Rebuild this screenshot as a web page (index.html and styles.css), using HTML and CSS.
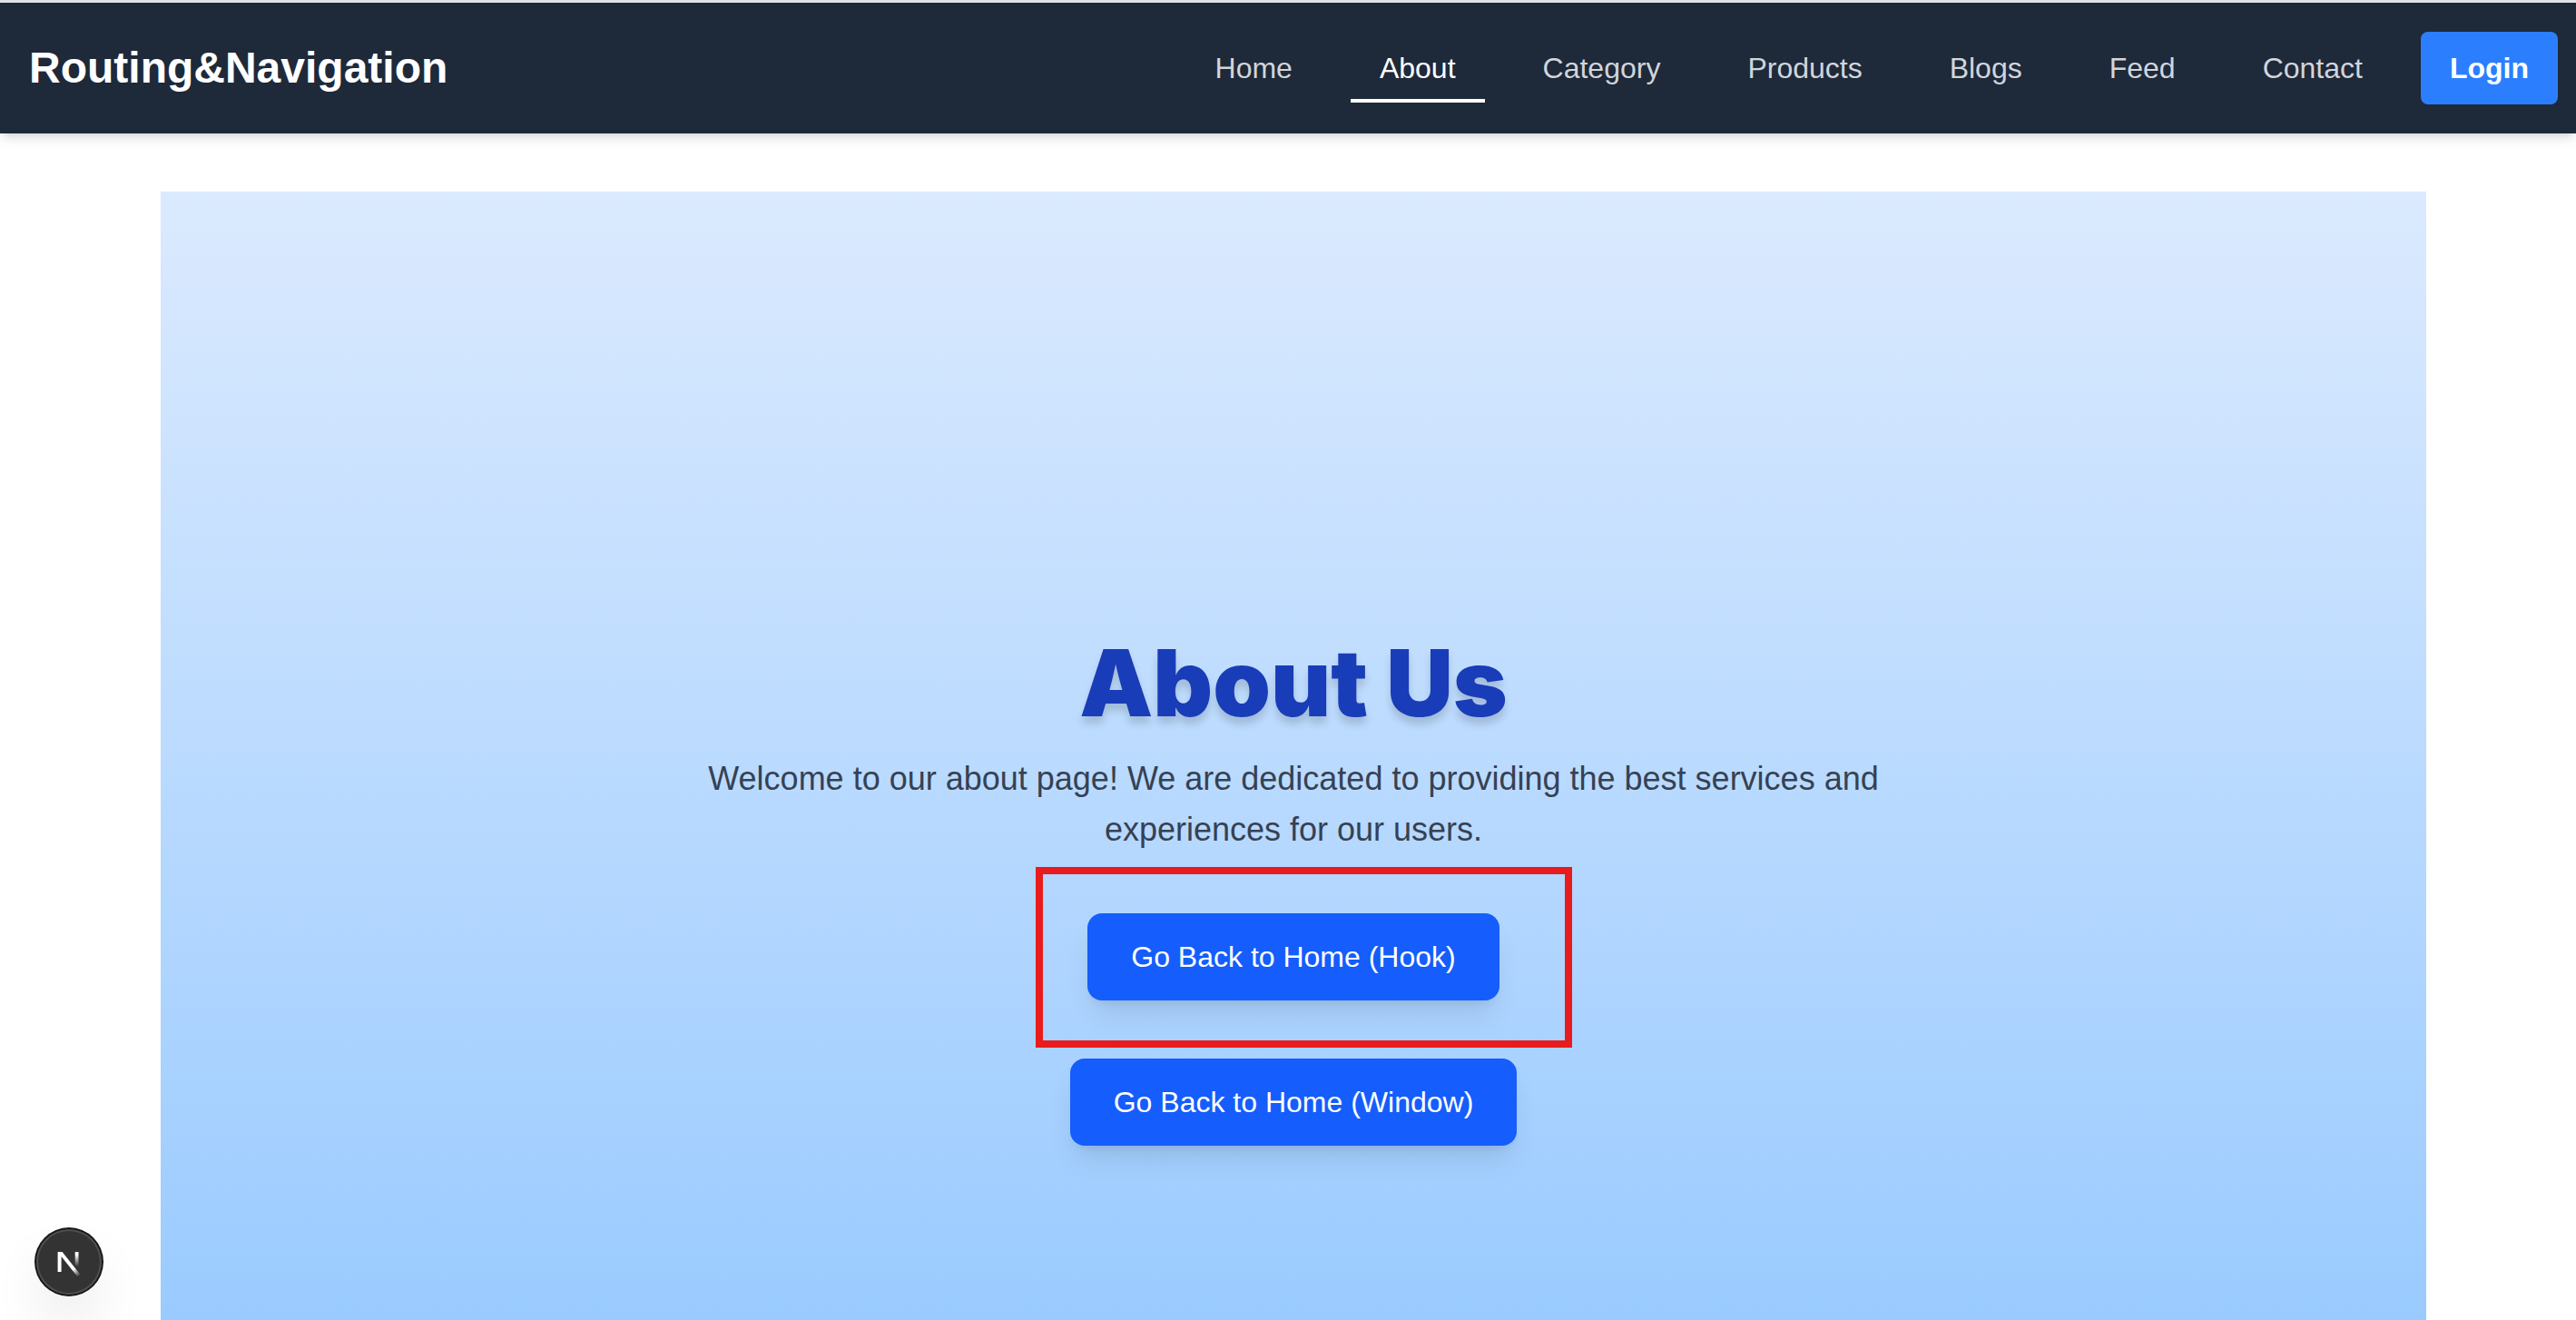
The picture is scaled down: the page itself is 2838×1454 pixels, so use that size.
FILE: index.html
```html
<!DOCTYPE html>
<html lang="en">
<head>
<meta charset="utf-8">
<title>About Us</title>
<link rel="stylesheet" href="styles.css">
</head>
<body>
<header class="site-header">
  <a class="brand" href="#">Routing&amp;Navigation</a>
  <nav>
    <ul class="nav-list">
      <li><a class="nav-link" href="#">Home</a></li>
      <li><a class="nav-link active" href="#" aria-current="page">About</a></li>
      <li><a class="nav-link" href="#">Category</a></li>
      <li><a class="nav-link" href="#">Products</a></li>
      <li><a class="nav-link" href="#">Blogs</a></li>
      <li><a class="nav-link" href="#">Feed</a></li>
      <li><a class="nav-link" href="#">Contact</a></li>
      <li><button class="login" type="button">Login</button></li>
    </ul>
  </nav>
</header>
<main class="page">
  <section class="hero">
    <h1 class="title">About Us</h1>
    <p class="intro">Welcome to our about page! We are dedicated to providing the best services and experiences for our users.</p>
    <div class="actions">
      <div class="highlighted">
        <button class="action" type="button">Go Back to Home (Hook)</button>
      </div>
      <button class="action" type="button">Go Back to Home (Window)</button>
    </div>
  </section>
</main>
<button class="dev-badge" type="button" aria-label="Open Next.js Dev Tools">
  <svg width="72" height="72" viewBox="0 0 72 72" fill="none" aria-hidden="true">
    <defs>
      <linearGradient id="diag" x1="37" y1="38" x2="47" y2="52" gradientUnits="userSpaceOnUse">
        <stop stop-color="#fff"/><stop offset="0.4" stop-color="#fff"/><stop offset="1" stop-color="#fff" stop-opacity="0"/>
      </linearGradient>
      <linearGradient id="stem" x1="45" y1="25" x2="45" y2="41" gradientUnits="userSpaceOnUse">
        <stop stop-color="#fff"/><stop offset="0.2" stop-color="#fff"/><stop offset="1" stop-color="#fff" stop-opacity="0"/>
      </linearGradient>
    </defs>
    <path d="M42.7 25h3.8v16h-3.8z" fill="url(#stem)"/>
    <path d="M23.6 25h5L48.5 50L45.5 52.5L27.6 30V47h-4z" fill="url(#diag)"/>
  </svg>
</button>
</body>
</html>
```
FILE: styles.css
```css
* {
  box-sizing: border-box;
}

body {
  display: flex;
  flex-direction: column;
  margin: 0;
  height: 100vh;
  background: #fff;
  border-top: 3px solid #dfe3e6;
  font-family: "Liberation Sans", Arial, sans-serif;
  font-size: 32px;
  line-height: 48px;
}

button {
  border: 0;
  font: inherit;
  cursor: pointer;
}

.site-header {
  position: relative;
  z-index: 1;
  display: flex;
  flex: none;
  align-items: center;
  justify-content: space-between;
  padding: 32px 20px 32px 32px;
  background: #1e2939;
  box-shadow: 0 8px 12px -2px rgb(0 0 0 / 0.1), 0 4px 8px -4px rgb(0 0 0 / 0.1);
}

.brand {
  color: #fff;
  font-size: 48px;
  font-weight: 700;
  line-height: 64px;
  text-decoration: none;
}

.nav-list {
  display: flex;
  align-items: center;
  gap: 32px;
  margin: 0;
  padding: 0;
  list-style: none;
}

.nav-link {
  padding: 16px 32px;
  color: #d1d5dc;
  text-decoration: none;
}

.nav-link.active {
  border-bottom: 4px solid #fff;
  color: #fff;
}

.login {
  display: block;
  padding: 16px 32px;
  border-radius: 8px;
  background: #2b7fff;
  color: #fff;
  font-weight: 700;
}

.page {
  flex: 1;
  min-height: 0;
  padding: 64px 32px 0 44px;
  overflow: hidden;
}

.hero {
  display: flex;
  flex-direction: column;
  align-items: center;
  justify-content: center;
  max-width: 2496px;
  min-height: calc(100vh + 8px);
  margin: 0 auto;
  padding-top: 88px;
  background: linear-gradient(to bottom in oklab, #dbeafe, #8ec5ff);
  text-align: center;
}

.title {
  margin: 0 0 36px;
  color: #193cb8;
  font-family: "Arial Black", Inter, sans-serif;
  font-size: 102px;
  font-weight: 900;
  line-height: 84px;
  text-shadow: 0 8px 8px rgb(0 0 0 / 0.15);
}

.intro {
  max-width: 1344px;
  margin: 0 0 64px;
  color: #364153;
  font-size: 36px;
  line-height: 56px;
}

.actions {
  display: flex;
  flex-direction: column;
  align-items: center;
  gap: 64px;
}

.action {
  display: block;
  padding: 24px 48px;
  border-radius: 16px;
  background: #155dfc;
  box-shadow: 0 20px 30px -6px rgb(0 0 0 / 0.1), 0 8px 12px -8px rgb(0 0 0 / 0.1);
  color: #fff;
}

.highlighted {
  position: relative;
}

/* Callout frame drawn over the hook button */
.highlighted::after {
  content: "";
  position: absolute;
  inset: -51px -80px -52px -57px;
  border: 8px solid #e81c1c;
  pointer-events: none;
}

.dev-badge {
  position: fixed;
  bottom: 28px;
  left: 40px;
  width: 72px;
  height: 72px;
  padding: 0;
  border-radius: 50%;
  background: #333;
  box-shadow: 0 0 0 2px #171717, inset 0 0 0 2px rgb(255 255 255 / 0.14), 0 32px 64px -16px rgb(0 0 0 / 0.24);
}

.dev-badge svg {
  display: block;
}
```
